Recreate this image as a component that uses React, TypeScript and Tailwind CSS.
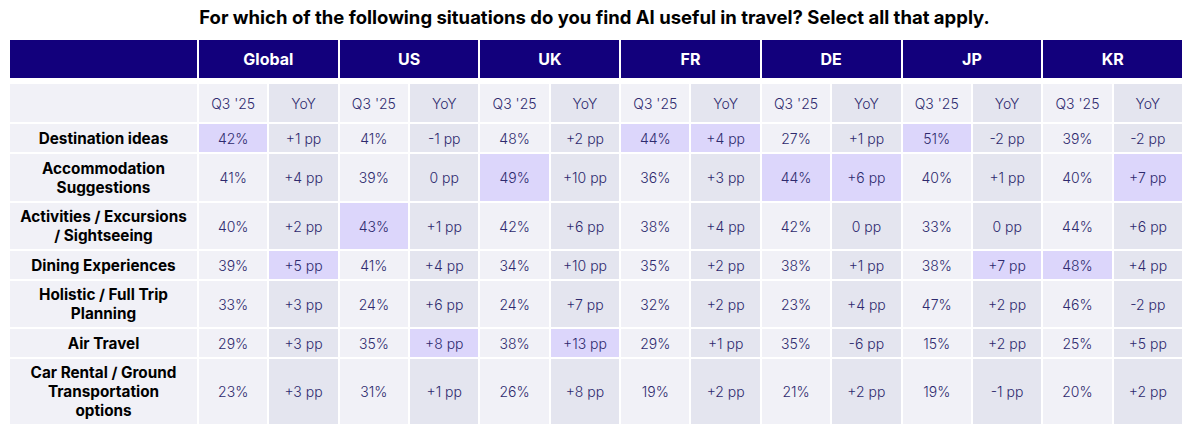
const markets = ["Global", "US", "UK", "FR", "DE", "JP", "KR"];

type Cell = [string, boolean];

const rows: { label: string[]; cells: Cell[] }[] = [
  {
    label: ["Destination ideas"],
    cells: [
      ["42%", true], ["+1 pp", false], ["41%", false], ["-1 pp", false], ["48%", false], ["+2 pp", false],
      ["44%", true], ["+4 pp", true], ["27%", false], ["+1 pp", false], ["51%", true], ["-2 pp", false],
      ["39%", false], ["-2 pp", false],
    ],
  },
  {
    label: ["Accommodation", "Suggestions"],
    cells: [
      ["41%", false], ["+4 pp", false], ["39%", false], ["0 pp", false], ["49%", true], ["+10 pp", false],
      ["36%", false], ["+3 pp", false], ["44%", true], ["+6 pp", true], ["40%", false], ["+1 pp", false],
      ["40%", false], ["+7 pp", true],
    ],
  },
  {
    label: ["Activities / Excursions", "/ Sightseeing"],
    cells: [
      ["40%", false], ["+2 pp", false], ["43%", true], ["+1 pp", false], ["42%", false], ["+6 pp", false],
      ["38%", false], ["+4 pp", false], ["42%", false], ["0 pp", false], ["33%", false], ["0 pp", false],
      ["44%", false], ["+6 pp", false],
    ],
  },
  {
    label: ["Dining Experiences"],
    cells: [
      ["39%", false], ["+5 pp", true], ["41%", false], ["+4 pp", false], ["34%", false], ["+10 pp", false],
      ["35%", false], ["+2 pp", false], ["38%", false], ["+1 pp", false], ["38%", false], ["+7 pp", true],
      ["48%", true], ["+4 pp", false],
    ],
  },
  {
    label: ["Holistic / Full Trip", "Planning"],
    cells: [
      ["33%", false], ["+3 pp", false], ["24%", false], ["+6 pp", false], ["24%", false], ["+7 pp", false],
      ["32%", false], ["+2 pp", false], ["23%", false], ["+4 pp", false], ["47%", false], ["+2 pp", false],
      ["46%", false], ["-2 pp", false],
    ],
  },
  {
    label: ["Air Travel"],
    cells: [
      ["29%", false], ["+3 pp", false], ["35%", false], ["+8 pp", true], ["38%", false], ["+13 pp", true],
      ["29%", false], ["+1 pp", false], ["35%", false], ["-6 pp", false], ["15%", false], ["+2 pp", false],
      ["25%", false], ["+5 pp", false],
    ],
  },
  {
    label: ["Car Rental / Ground", "Transportation", "options"],
    cells: [
      ["23%", false], ["+3 pp", false], ["31%", false], ["+1 pp", false], ["26%", false], ["+8 pp", false],
      ["19%", false], ["+2 pp", false], ["21%", false], ["+2 pp", false], ["19%", false], ["-1 pp", false],
      ["20%", false], ["+2 pp", false],
    ],
  },
];

function valueCell(text: string, hl: boolean, yoy: boolean, key: string) {
  const bg = hl ? "bg-[#dcd6fb]" : yoy ? "bg-[#e4e5ef]" : "bg-[#f1f1f7]";
  return (
    <div key={key} className={`${bg} flex items-center justify-center text-[14px] font-light text-[#2e2a6e]`}>
      {text}
    </div>
  );
}

export default function App() {
  return (
    <div className="w-[1189px] h-[428px] bg-white font-['Inter','Liberation_Sans',sans-serif]">
      <h1 className="h-[40px] pt-[6px] text-center text-[18.5px] font-bold leading-[22px] text-black">
        For which of the following situations do you find AI useful in travel? Select all that apply.
      </h1>
      <div className="ml-[10px] w-[1172px] grid grid-cols-[187px_repeat(14,minmax(0,1fr))] grid-rows-[42px_38px_28px_47px_46px_28px_46px_28px_65px] gap-[2px]">
        <div className="bg-[#12007c] mb-[4px]" />
        {markets.map((m) => (
          <div
            key={m}
            className="col-span-2 mb-[4px] flex items-center justify-center bg-[#12007c] text-[16px] font-bold text-white"
          >
            {m}
          </div>
        ))}

        <div className="bg-[#f1f1f7]" />
        {markets.map((m) => [
          <div key={m + "q"} className="flex items-center justify-center bg-[#f1f1f7] text-[14px] font-light text-[#2e2a6e]">
            Q3 '25
          </div>,
          <div key={m + "y"} className="flex items-center justify-center bg-[#e4e5ef] text-[14px] font-light text-[#2e2a6e]">
            YoY
          </div>,
        ])}

        {rows.map((r) => [
          <div
            key={r.label[0]}
            className="flex flex-col items-center justify-center bg-[#f1f1f7] text-center text-[15.3px] font-bold leading-[19px] text-black"
          >
            {r.label.map((l) => (
              <span key={l}>{l}</span>
            ))}
          </div>,
          ...r.cells.map(([t, hl], i) => valueCell(t, hl, i % 2 === 1, r.label[0] + i)),
        ])}
      </div>
    </div>
  );
}
